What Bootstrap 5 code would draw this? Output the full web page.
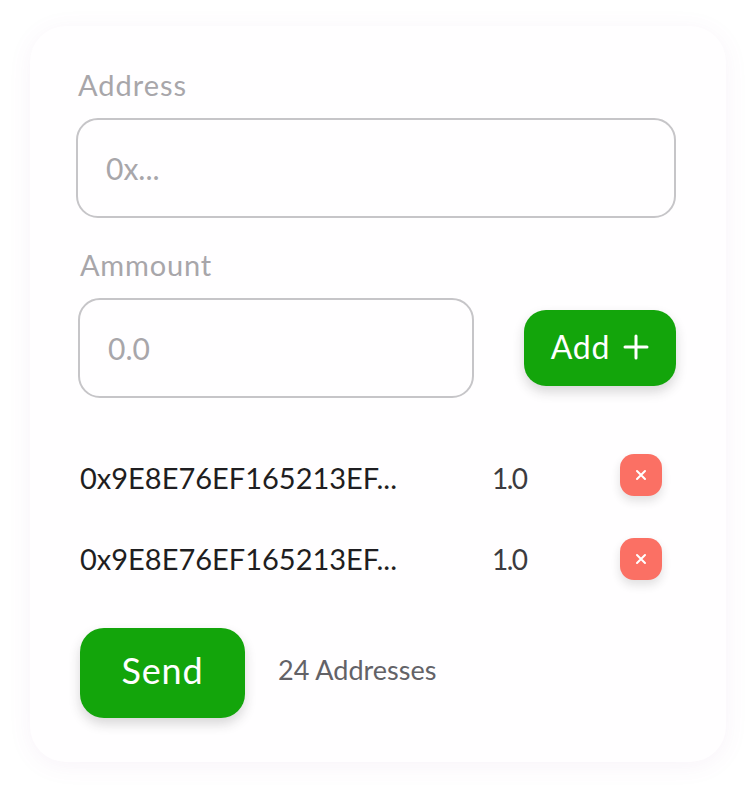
<!DOCTYPE html>
<html lang="en">
<head>
<meta charset="utf-8">
<title>Send</title>
<link href="https://cdn.jsdelivr.net/npm/bootstrap@5.3.0/dist/css/bootstrap.min.css" rel="stylesheet">
<style>
html, body { height: 100%; }
body { background: #fff; font-family: "Lato", "Liberation Sans", sans-serif; overflow: hidden; }
.page-wrap { padding: 26px 30px 0 30px; }
.send-card { width: 696px; height: 736px; background: #fffeff; border: 0; border-radius: 36px; box-shadow: 0 4px 24px rgba(150, 80, 170, .07); padding: 0; }
.field-label { color: #a8a6aa; font-size: 29px; line-height: 34px; margin: 0; letter-spacing: 1px; }
.label-address { padding: 42px 0 0 48px; height: 76px; margin-bottom: 16px; }
.label-ammount { padding-left: 50px; height: 34px; margin-top: 30px; margin-bottom: 16px; letter-spacing: .8px; }
.field-input { border: 2px solid #c6c5c8; border-radius: 22px; height: 100px; font-size: 30px; color: #222; background: #fffeff; box-shadow: none; }
.field-input::placeholder { color: #a8a6aa; opacity: 1; }
.input-address { width: 600px; margin-left: 46px; padding: 0 28px; }
.input-ammount { width: 396px; padding: 0 28px; }
.ammount-row { padding-left: 48px; padding-right: 50px; }
.green-btn { background: #13a50b; color: #fff; border: 0; box-shadow: 0 6px 12px rgba(40, 40, 40, .18); }
.green-btn:hover { background: #13a50b; color: #fff; }
.add-btn { width: 152px; height: 76px; border-radius: 22px; font-size: 32px; letter-spacing: .8px; padding: 0 0 2px; gap: 13px; }
.list-area { margin-top: 56px; padding-left: 50px; }
.entry-row { height: 42px; margin-bottom: 42px; }
.entry-address { width: 412px; font-size: 29px; color: #1f1e21; }
.entry-amount { width: 128px; font-size: 28px; letter-spacing: -1.5px; color: #3c3b40; }
.row-first .entry-address, .row-first .entry-amount { padding-top: 5px; }
.remove-btn { width: 42px; height: 42px; border-radius: 14px; background: #fb7064; border: 0; padding: 0; box-shadow: 0 5px 10px rgba(40, 40, 40, .14); }
.footer-row { margin-top: 6px; padding-left: 50px; gap: 33px; }
.send-btn { width: 165px; height: 90px; border-radius: 24px; font-size: 36px; letter-spacing: .8px; padding: 0 0 7px; }
.count-text { font-size: 27px; color: #636267; padding-bottom: 6px; }
</style>
</head>
<body>
<div class="page-wrap">
  <div class="card send-card">
    <label class="field-label label-address d-block" for="addr">Address</label>
    <input id="addr" class="form-control field-input input-address" type="text" placeholder="0x...">
    <label class="field-label label-ammount d-block" for="amt">Ammount</label>
    <div class="d-flex justify-content-between align-items-center ammount-row">
      <input id="amt" class="form-control field-input input-ammount" type="text" placeholder="0.0">
      <button type="button" class="btn green-btn add-btn d-flex align-items-center justify-content-center">
        <span>Add</span>
        <svg width="26" height="26" viewBox="0 0 26 26" fill="none" stroke="#fff" stroke-width="3" stroke-linecap="round" aria-hidden="true"><path d="M13 2v22M2 13h22"/></svg>
      </button>
    </div>
    <div class="list-area">
      <div class="d-flex align-items-center entry-row row-first">
        <div class="entry-address">0x9E8E76EF165213EF...</div>
        <div class="entry-amount">1.0</div>
        <button type="button" class="btn remove-btn d-flex align-items-center justify-content-center" aria-label="Remove">
          <svg width="12" height="12" viewBox="0 0 12 12" fill="none" stroke="#fff" stroke-width="2" stroke-linecap="round" aria-hidden="true"><path d="M2 2l8 8M10 2l-8 8"/></svg>
        </button>
      </div>
      <div class="d-flex align-items-center entry-row">
        <div class="entry-address">0x9E8E76EF165213EF...</div>
        <div class="entry-amount">1.0</div>
        <button type="button" class="btn remove-btn d-flex align-items-center justify-content-center" aria-label="Remove">
          <svg width="12" height="12" viewBox="0 0 12 12" fill="none" stroke="#fff" stroke-width="2" stroke-linecap="round" aria-hidden="true"><path d="M2 2l8 8M10 2l-8 8"/></svg>
        </button>
      </div>
    </div>
    <div class="d-flex align-items-center footer-row">
      <button type="button" class="btn green-btn send-btn">Send</button>
      <span class="count-text">24 Addresses</span>
    </div>
  </div>
</div>
<script src="https://cdn.jsdelivr.net/npm/bootstrap@5.3.0/dist/js/bootstrap.bundle.min.js"></script>
</body>
</html>
